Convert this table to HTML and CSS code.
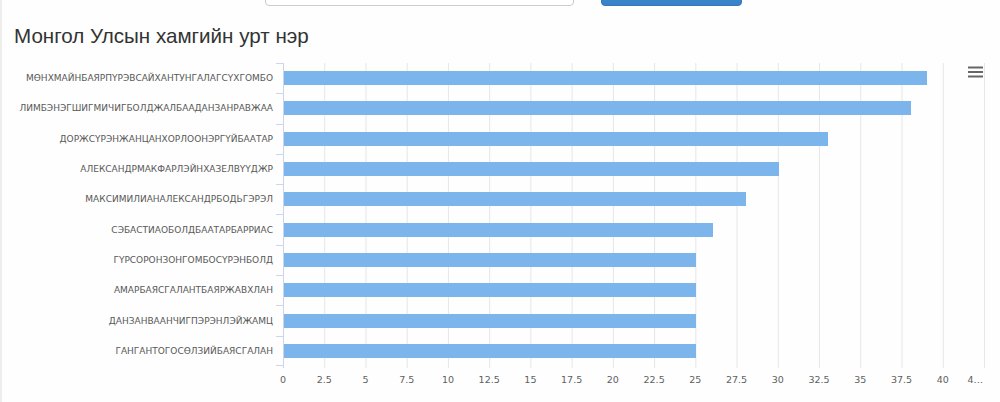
FILE: index.html
```html
<!DOCTYPE html>
<html lang="mn">
<head>
<meta charset="utf-8">
<title>Монгол Улсын хамгийн урт нэр</title>
<link rel="stylesheet" href="styles.css">
</head>
<body>
<div class="page">
  <div class="controls">
    <input class="search" type="text">
    <button class="btn" type="button"></button>
  </div>
  <h3 class="title">Монгол Улсын хамгийн урт нэр</h3>
  <div class="chart">
    <div class="cats">
      <div class="cat">МӨНХМАЙНБАЯРПҮРЭВСАЙХАНТУНГАЛАГСҮХГОМБО</div>
      <div class="cat">ЛИМБЭНЭГШИГМИЧИГБОЛДЖАЛБААДАНЗАНРАВЖАА</div>
      <div class="cat">ДОРЖСҮРЭНЖАНЦАНХОРЛООНЭРГҮЙБААТАР</div>
      <div class="cat">АЛЕКСАНДРМАКФАРЛЭЙНХАЗЕЛВҮҮДЖР</div>
      <div class="cat">МАКСИМИЛИАНАЛЕКСАНДРБОДЬГЭРЭЛ</div>
      <div class="cat">СЭБАСТИАОБОЛДБААТАРБАРРИАС</div>
      <div class="cat">ГҮРСОРОНЗОНГОМБОСҮРЭНБОЛД</div>
      <div class="cat">АМАРБАЯСГАЛАНТБАЯРЖАВХЛАН</div>
      <div class="cat">ДАНЗАНВААНЧИГПЭРЭНЛЭЙЖАМЦ</div>
      <div class="cat last">ГАНГАНТОГОСӨЛЗИЙБАЯСГАЛАН</div>
    </div>
    <div class="plot">
      <div class="row"><div class="bar" style="width:91.765%"></div></div>
      <div class="row"><div class="bar" style="width:89.412%"></div></div>
      <div class="row"><div class="bar" style="width:77.647%"></div></div>
      <div class="row"><div class="bar" style="width:70.588%"></div></div>
      <div class="row"><div class="bar" style="width:65.882%"></div></div>
      <div class="row"><div class="bar" style="width:61.176%"></div></div>
      <div class="row"><div class="bar" style="width:58.824%"></div></div>
      <div class="row"><div class="bar" style="width:58.824%"></div></div>
      <div class="row"><div class="bar" style="width:58.824%"></div></div>
      <div class="row"><div class="bar" style="width:58.824%"></div></div>
    </div>
    <div class="xlabels">
      <span>0</span><span>2.5</span><span>5</span><span>7.5</span><span>10</span><span>12.5</span>
      <span>15</span><span>17.5</span><span>20</span><span>22.5</span><span>25</span><span>27.5</span>
      <span>30</span><span>32.5</span><span>35</span><span>37.5</span><span>40</span><span class="trunc">4…</span>
    </div>
    <div class="menu" aria-label="Chart menu">
      <svg width="15" height="12" viewBox="0 0 15 12">
        <rect x="0" y="0.5" width="15" height="2" fill="#666"/>
        <rect x="0" y="5" width="15" height="2" fill="#666"/>
        <rect x="0" y="9.5" width="15" height="2" fill="#666"/>
      </svg>
    </div>
  </div>
</div>
</body>
</html>
```
FILE: styles.css
```css
html, body {
  margin: 0;
  padding: 0;
  background: #fdfefd;
}

.page {
  width: 1000px;
  height: 402px;
  overflow: hidden;
  box-shadow: inset 2px 0 0 #eeeeee;
}

.controls {
  height: 6px;
  display: flex;
  align-items: flex-end;
  gap: 27px;
  overflow: hidden;
  padding-left: 265px;
}

.search {
  box-sizing: border-box;
  width: 309px;
  height: 34px;
  margin: 0;
  border: 1px solid #cccccc;
  border-radius: 4px;
  background: #ffffff;
  flex: none;
}

.btn {
  box-sizing: border-box;
  width: 141px;
  height: 34px;
  margin: 0;
  border: 1px solid #3577bb;
  border-radius: 4px;
  background: #3b83c8;
  flex: none;
}

.title {
  margin: 18px 0 0 14px;
  font-family: "Liberation Sans", Arial, sans-serif;
  font-weight: normal;
  font-size: 20.6px;
  line-height: 24px;
  color: #333333;
}

.chart {
  position: relative;
  margin-top: 15px;
  display: grid;
  grid-template-columns: 283px 702px;
  grid-template-rows: 303px auto;
}

.cats {
  display: grid;
  grid-template-rows: repeat(10, 30.3px);
  font-family: "DejaVu Sans", Verdana, sans-serif;
  font-size: 9px;
  color: #585858;
}

.cat {
  display: flex;
  align-items: center;
  justify-content: flex-end;
  padding-right: 10px;
  white-space: nowrap;
  background: linear-gradient(#ccd6eb, #ccd6eb) right top / 7px 1px no-repeat;
}

.cat.last {
  background:
    linear-gradient(#ccd6eb, #ccd6eb) right top / 7px 1px no-repeat,
    linear-gradient(#ccd6eb, #ccd6eb) right bottom / 7px 1px no-repeat;
}

.plot {
  display: grid;
  grid-template-rows: repeat(10, 30.3px);
  border-left: 1px solid #ccd6eb;
  background-image: linear-gradient(to right, #e6e6e6 0 1px, transparent 1px);
  background-size: 41.235px 100%;
  background-position: -1px 0;
  background-repeat: repeat-x;
  padding-bottom: 2px;
  margin-bottom: -2px;
}

.row {
  display: flex;
  align-items: center;
}

.bar {
  height: 14px;
  background: #7cb5ec;
}

.xlabels {
  grid-column: 1 / 3;
  display: flex;
  padding-left: 262.4px;
  margin-top: 7px;
  font-family: "DejaVu Sans", Verdana, sans-serif;
  font-size: 9.5px;
  line-height: 14px;
  color: #606060;
}

.xlabels span {
  flex: none;
  width: 41.235px;
  text-align: center;
}

.xlabels .trunc {
  text-align: left;
  padding-left: 4px;
  box-sizing: border-box;
}

.menu {
  position: absolute;
  left: 968px;
  top: 3px;
  width: 15px;
  height: 12px;
  line-height: 0;
}
```
